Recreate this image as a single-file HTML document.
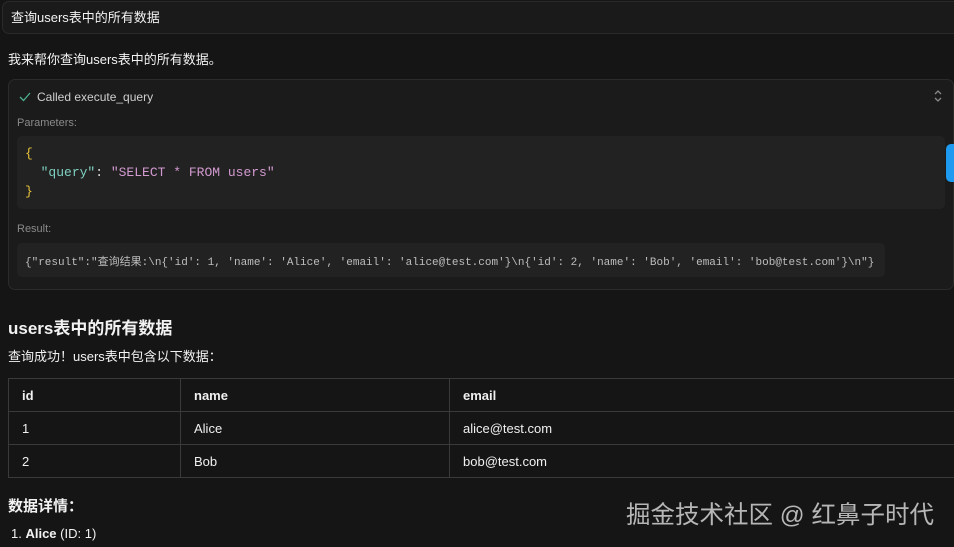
<!DOCTYPE html>
<html><head><meta charset="utf-8"><style>
body{margin:0;width:954px;height:547px;background:#151515;color:#e8e8e8;font-family:"Liberation Sans","Noto Sans CJK SC",sans-serif;overflow:hidden;position:relative}
.abs{position:absolute}
.mono{font-family:"Liberation Mono","DejaVu Sans Mono","Noto Sans CJK SC",monospace}
td,th{border:1px solid #3a3a3a;padding:0 13px;height:32px;text-align:left;font-size:13px}
th{font-weight:bold}
</style></head><body>
<div class="abs" style="left:2px;top:1px;width:960px;height:31px;background:#1a1a1a;border:1px solid #2a2a2a;border-radius:7px"></div>
<div class="abs" style="left:11px;top:7px;font-size:13px;color:#f2f2f2">查询users表中的所有数据</div>
<div class="abs" style="left:8px;top:49px;font-size:13px;color:#f2f2f2">我来帮你查询users表中的所有数据。</div>
<div class="abs" style="left:8px;top:79px;width:944px;height:209px;background:#1b1b1b;border:1px solid #2b2b2b;border-radius:7px"></div>
<svg class="abs" style="left:19px;top:92px" width="12" height="10" viewBox="0 0 12 10"><path d="M1 5 L4.5 8.5 L11 1" stroke="#4caf8a" stroke-width="1.3" fill="none"/></svg>
<div class="abs" style="left:37px;top:90px;font-size:12px;color:#cfcfcf">Called execute_query</div>
<svg class="abs" style="left:933px;top:89px" width="10" height="14" viewBox="0 0 10 14"><path d="M2 5 L5 2 L8 5 M2 9 L5 12 L8 9" stroke="#888" stroke-width="1.3" fill="none"/></svg>
<div class="abs" style="left:17px;top:117px;font-size:11px;color:#8a8a8a">Parameters:</div>
<div class="abs" style="left:17px;top:136px;width:928px;height:73px;background:#222;border-radius:5px"></div>
<div class="abs mono" style="left:25px;top:144px;font-size:13px;line-height:19px;white-space:pre;color:#ddd"><span style="color:#e8c33a">{</span>
  <span style="color:#7ecfc0">"query"</span>: <span style="color:#d39ad0">"SELECT * FROM users"</span>
<span style="color:#e8c33a">}</span></div>
<div class="abs" style="left:946px;top:144px;width:10px;height:38px;background:#1e9bf0;border-radius:5px 0 0 5px"></div>
<div class="abs" style="left:17px;top:223px;font-size:11px;color:#8a8a8a">Result:</div>
<div class="abs" style="left:17px;top:243px;width:868px;height:34px;background:#222;border-radius:5px"></div>
<div class="abs mono" style="left:25px;top:253px;font-size:11px;color:#bdbdbd;white-space:pre">{"result":"查询结果:\n{'id': 1, 'name': 'Alice', 'email': 'alice@test.com'}\n{'id': 2, 'name': 'Bob', 'email': 'bob@test.com'}\n"}</div>
<div class="abs" style="left:8px;top:314px;font-size:17px;font-weight:bold;color:#f2f2f2">users表中的所有数据</div>
<div class="abs" style="left:8px;top:346px;font-size:13px;color:#f2f2f2">查询成功！users表中包含以下数据：</div>
<table class="abs" style="left:8px;top:378px;width:948px;border-collapse:collapse;color:#f0f0f0">
<tr><th style="width:145px">id</th><th style="width:242px">name</th><th>email</th></tr>
<tr><td>1</td><td>Alice</td><td>alice@test.com</td></tr>
<tr><td>2</td><td>Bob</td><td>bob@test.com</td></tr>
</table>
<div class="abs" style="left:8px;top:495px;font-size:15px;font-weight:bold;color:#f2f2f2">数据详情：</div>
<div class="abs" style="left:11px;top:526px;font-size:13px;color:#f2f2f2">1. <b>Alice</b> (ID: 1)</div>
<div class="abs" style="left:626px;top:496px;font-size:24.5px;color:#c8c8c8;opacity:.9">掘金技术社区 @ 红鼻子时代</div>
</body></html>
